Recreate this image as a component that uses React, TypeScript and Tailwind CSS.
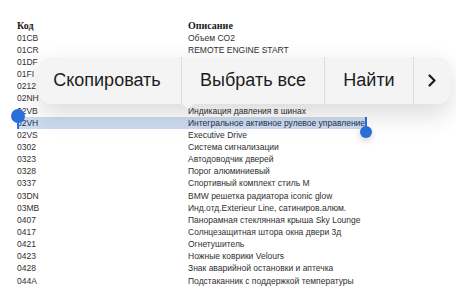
import React from "react";

const rows: [string, string][] = [
  ["01CB", "Объем CO2"],
  ["01CR", "REMOTE ENGINE START"],
  ["01DF", ""],
  ["01FI", ""],
  ["0212", ""],
  ["02NH", ""],
  ["02VB", "Индикация давления в шинах"],
  ["02VH", "Интегральное активное рулевое управление"],
  ["02VS", "Executive Drive"],
  ["0302", "Система сигнализации"],
  ["0323", "Автодоводчик дверей"],
  ["0328", "Порог алюминиевый"],
  ["0337", "Спортивный комплект стиль M"],
  ["03DN", "BMW решетка радиатора iconic glow"],
  ["03MB", "Инд.отд.Exterieur Line, сатиниров.алюм."],
  ["0407", "Панорамная стеклянная крыша Sky Lounge"],
  ["0417", "Солнцезащитная штора окна двери 3д"],
  ["0421", "Огнетушитель"],
  ["0423", "Ножные коврики Velours"],
  ["0428", "Знак аварийной остановки и аптечка"],
  ["044A", "Подстаканник с поддержкой температуры"],
];

export default function App() {
  return (
    <div className="relative w-[456px] h-[287px] overflow-hidden bg-white">
      <div className="pt-[19px] pl-[17px] font-['Liberation_Sans',Arial,sans-serif] text-[8.5px] text-[#303030]">
        <div className="flex h-[13px] items-center font-['Liberation_Serif','Times_New_Roman',serif] font-bold text-[10px] text-[#1a1a1a]">
          <div className="w-[171px]">Код</div>
          <div>Описание</div>
        </div>
        {rows.map(([code, desc]) => {
          const sel = code === "02VH";
          return (
            <div
              key={code}
              className={
                sel
                  ? "flex h-[12.15px] w-[349px] items-center bg-[#cddbef] text-[#22304a]"
                  : "flex h-[12.15px] items-center"
              }
            >
              <div className="w-[171px] whitespace-nowrap">{code}</div>
              <div className="whitespace-nowrap">{desc}</div>
            </div>
          );
        })}
      </div>

      {/* selection handles */}
      <div className="absolute left-[17px] top-[117px] h-[12px] w-[2px] bg-[#2a6fdc]" />
      <div className="absolute left-[11px] top-[109px] h-[14px] w-[14px] rounded-full bg-[#2a6fdc]" />
      <div className="absolute left-[365px] top-[117px] h-[14px] w-[2px] bg-[#2a6fdc]" />
      <div className="absolute left-[360px] top-[126px] h-[12px] w-[12px] rounded-full bg-[#2a6fdc] shadow-[0_3px_6px_rgba(0,0,0,0.18)]" />

      {/* context menu */}
      <div className="absolute left-[39px] top-[57px] flex h-[47px] w-[411px] rounded-[12px] bg-[#f4f4f4] shadow-[0_10px_26px_rgba(0,0,0,0.15)] font-['Liberation_Sans',Arial,sans-serif] text-[18px] text-[#1c1c1e]">
        <div className="flex w-[142px] items-center justify-center pr-[6px]">Скопировать</div>
        <div className="flex w-[143px] items-center justify-center border-l border-[#dcdcdc]">Выбрать все</div>
        <div className="flex w-[89px] items-center justify-center border-l border-[#dcdcdc]">Найти</div>
        <div className="flex flex-1 items-center justify-center border-l border-[#dcdcdc]">
          <svg width="8" height="13" viewBox="0 0 8 13">
            <path d="M1.5 1.5 L6.5 6.5 L1.5 11.5" fill="none" stroke="#1c1c1e" strokeWidth="2.2" strokeLinecap="round" strokeLinejoin="round" />
          </svg>
        </div>
        <div className="absolute left-[142px] top-[46px] h-0 w-0 border-l-[7px] border-r-[7px] border-t-[6px] border-l-transparent border-r-transparent border-t-[#f4f4f4]" />
      </div>
    </div>
  );
}
